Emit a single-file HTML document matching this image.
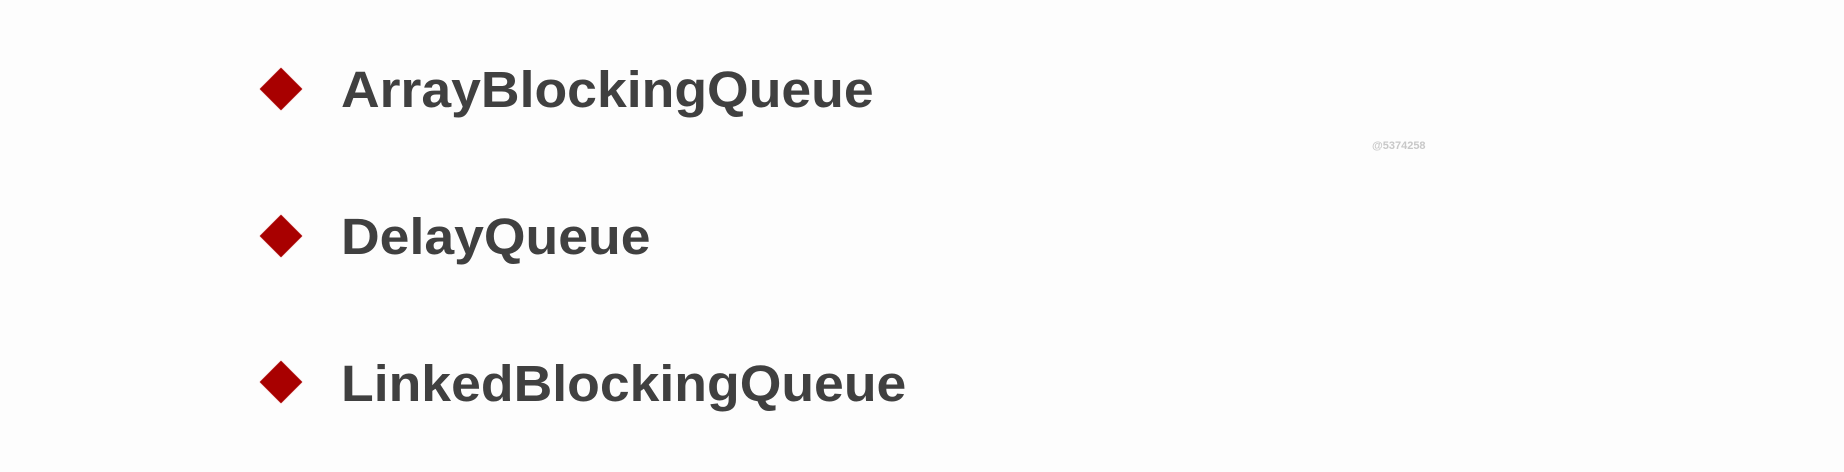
<!DOCTYPE html>
<html><head><meta charset="utf-8"><style>
html,body{margin:0;padding:0;}
body{width:1844px;height:472px;background:#fdfdfd;position:relative;overflow:hidden;font-family:"Liberation Sans",sans-serif;}
.t{position:absolute;left:341px;font-weight:bold;font-size:51px;line-height:51px;color:#404040;letter-spacing:0;white-space:nowrap;transform:scaleX(1.05);transform-origin:0 0;}
.d{position:absolute;left:266px;width:30px;height:30px;background:#a80000;transform:rotate(45deg);box-shadow:0 0 1px #d04040;}
.w{position:absolute;left:1372px;top:140px;font-size:11px;color:#c8c8c8;font-weight:bold;}
</style></head><body>
<div class="d" style="top:74px"></div>
<div class="t" style="top:64px">ArrayBlockingQueue</div>
<div class="d" style="top:221px"></div>
<div class="t" style="top:211px">DelayQueue</div>
<div class="d" style="top:367px"></div>
<div class="t" style="top:358px">LinkedBlockingQueue</div>
<div class="w">@5374258</div>
</body></html>
